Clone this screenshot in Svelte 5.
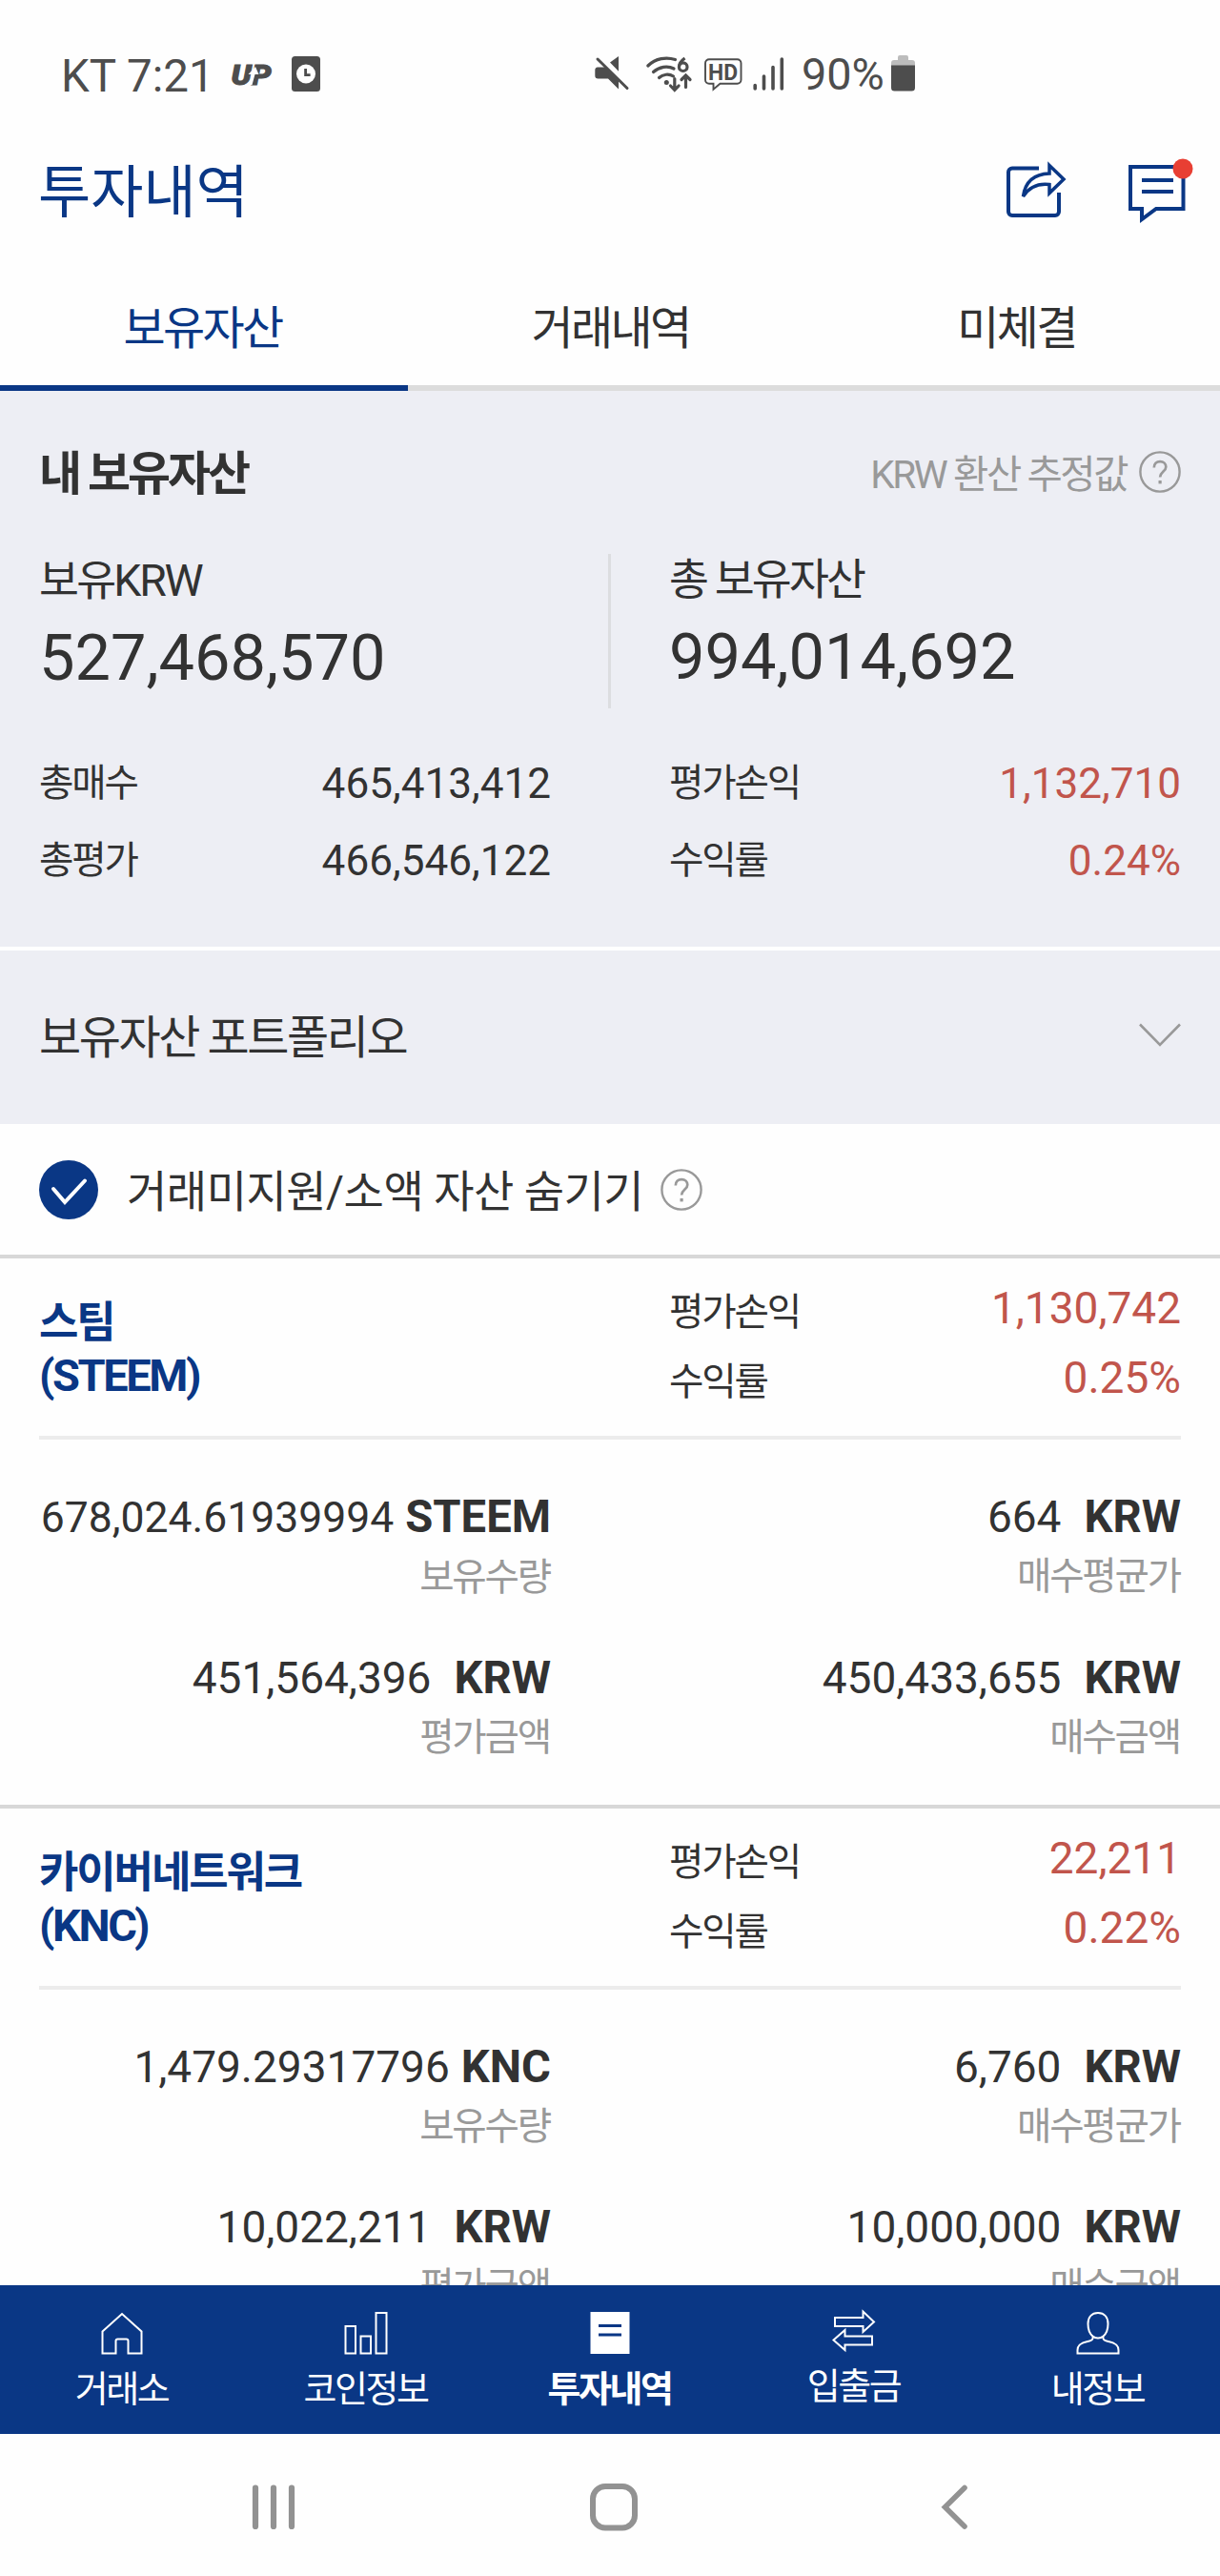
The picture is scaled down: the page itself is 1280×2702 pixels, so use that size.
<script>
    let activeTab = $state("보유자산");
    let hideSmall = $state(true);

    const tabs = ["보유자산", "거래내역", "미체결"];

    const coins = [
        {
            name: "스팀",
            symbol: "STEEM",
            profit: "1,130,742",
            rate: "0.25%",
            amount: "678,024.61939994",
            compact: true,
            avgPrice: "664",
            value: "451,564,396",
            bought: "450,433,655"
        },
        {
            name: "카이버네트워크",
            symbol: "KNC",
            profit: "22,211",
            rate: "0.22%",
            amount: "1,479.29317796",
            compact: false,
            avgPrice: "6,760",
            value: "10,022,211",
            bought: "10,000,000"
        }
    ];

    const menu = [
        { id: "home", label: "거래소" },
        { id: "chart", label: "코인정보" },
        { id: "list", label: "투자내역" },
        { id: "transfer", label: "입출금" },
        { id: "user", label: "내정보" }
    ];
    const activeMenu = "list";
</script>

{#snippet help()}
    <svg class="help" viewBox="0 0 44 44">
        <circle cx="22" cy="22" r="20.6" fill="none" stroke="#999" stroke-width="2.4" />
        <path d="M15.8 17.5c0-4 2.6-6.4 6.3-6.4s6.2 2.3 6.2 5.6c0 5-6.2 5.4-6.2 10.8" fill="none" stroke="#999" stroke-width="2.7" />
        <rect x="20.5" y="31" width="3.2" height="3.4" fill="#999" />
    </svg>
{/snippet}

<div class="screen">
    <div class="status">
        <span class="clock">KT 7:21</span>
        <svg class="up" width="46" height="24" viewBox="0 0 46 24">
            <text x="0.5" y="21.5" textLength="42" lengthAdjust="spacingAndGlyphs">UP</text>
            <path d="M19.5 22l3-11h-4l7.5-8 3.5 8h-4l-3 11z" fill="#fefefe" />
        </svg>
        <svg class="watch" width="30" height="38" viewBox="0 0 30 38">
            <rect width="30" height="37" rx="3.5" fill="#4d4d4d" />
            <circle cx="15" cy="18.5" r="10" fill="#fff" />
            <path d="M14.6 13v6.6h5" fill="none" stroke="#4d4d4d" stroke-width="2.8" />
        </svg>

        <svg class="mute" width="36" height="36" viewBox="0 0 36 36">
            <path d="M3 11.5h7.5L25 26v8.5L14 23.5H3.5a3.2 3.2 0 0 1-3.2-3.2v-5.8a3 3 0 0 1 2.7-3z" fill="#4d4d4d" />
            <path d="M16 6.5L25 0v15.8z" fill="#4d4d4d" />
            <path d="M3 3l31 30.5" stroke="#4d4d4d" stroke-width="3" stroke-linecap="round" />
        </svg>
        <svg class="wifi" width="48" height="37" viewBox="0 0 48 37">
            <g fill="none" stroke="#4d4d4d" stroke-width="3.2" stroke-linecap="round">
                <path d="M1.8 10C10 2 21 .5 30.5 3.5" />
                <path d="M7.5 16.5c6-5.6 15-7 21.5-3.5" />
                <path d="M13.5 22.5c4-3.8 10.5-4.4 15-1.5" />
                <path d="M29.8 23.5v11.5M25.5 31l4.3 4.5 4.3-4.5M41.5 32.5v-12M37 24.5l4.5-4.5 4.5 4.5" />
                <path d="M40.5 2c-3.5 2.5-6 6-6 9" stroke-linecap="butt" />
                <circle cx="38.7" cy="11.2" r="4.3" />
            </g>
            <circle cx="21.3" cy="27.5" r="2.5" fill="#4d4d4d" />
        </svg>
        <svg class="hd" width="40" height="34" viewBox="0 0 40 34">
            <path d="M5 1.2h29.5a4 4 0 0 1 4 4v17.6a4 4 0 0 1-4 4H16.5l-7 6v-6H5a4 4 0 0 1-4-4V5.2a4 4 0 0 1 4-4z" fill="none" stroke="#4d4d4d" stroke-width="1.9" />
            <text x="4" y="22.5" textLength="31" lengthAdjust="spacingAndGlyphs">HD</text>
        </svg>
        <svg class="signal" width="34" height="36" viewBox="0 0 34 36">
            <path d="M2.2 29.5V33M11.5 20V33M21 10.5V33M30.3 2V33" stroke="#4d4d4d" stroke-width="3.6" stroke-linecap="round" />
        </svg>
        <span class="percent">90%</span>
        <svg class="battery" width="25" height="38" viewBox="0 0 25 38">
            <path d="M7 4V2a2 2 0 0 1 2-2h7a2 2 0 0 1 2 2v3h4a3 3 0 0 1 3 3v3H0V8a3 3 0 0 1 3-3h4z" fill="#bcbcbc" />
            <path d="M0 10.5h25V34a3.5 3.5 0 0 1-3.5 3.5h-18A3.5 3.5 0 0 1 0 34z" fill="#4d4d4d" />
        </svg>
    </div>

    <div class="header">
        <h1>투자내역</h1>
        <svg class="share" width="64" height="66" viewBox="0 0 64 66" fill="none" stroke="#0a3785" stroke-width="4">
            <path d="M35 11.5H7a4 4 0 0 0-4 4V57a4 4 0 0 0 4 4h45a4 4 0 0 0 4-4V37" />
            <path d="M46 8.5L61 23 46 37.5V28.5C34 27 25 31 18.5 41 20.5 27 29 17.500 46 17z" stroke-width="3.5" />
        </svg>
        <svg class="message" width="70" height="68" viewBox="0 0 70 68">
            <path d="M2 11h55.5v44H29L14 66V55H2z" fill="none" stroke="#0a3785" stroke-width="4" />
            <path d="M14 25h33M14 37h33" stroke="#0a3785" stroke-width="4.2" />
            <circle cx="57" cy="13" r="10.5" fill="#e83f33" />
        </svg>
    </div>

    <div class="tabs">
        {#each tabs as tab}
        <button class="tab" class:active={tab === activeTab} onclick={() => activeTab = tab}>{tab}</button>
        {/each}
    </div>

    <div class="summary">
        <div class="summary-head">
            <h2>내 보유자산</h2>
            <span class="hint">KRW 환산 추정값</span>
            {@render help()}
        </div>

        <div class="totals">
            <div class="total">
                <div class="total-label">보유<span class="krw">KRW</span></div>
                <div class="total-number">527,468,570</div>
            </div>
            <div class="total right">
                <div class="total-label">총 보유자산</div>
                <div class="total-number">994,014,692</div>
            </div>
        </div>

        <div class="rows">
            <div class="row"><span class="label">총매수</span><span class="number">465,413,412</span></div>
            <div class="row"><span class="label">평가손익</span><span class="number red">1,132,710</span></div>
            <div class="row"><span class="label">총평가</span><span class="number">466,546,122</span></div>
            <div class="row"><span class="label">수익률</span><span class="number red">0.24%</span></div>
        </div>
    </div>

    <div class="portfolio">
        <span>보유자산 포트폴리오</span>
        <svg width="44" height="26" viewBox="0 0 44 26">
            <path d="M1 1.5l21 21.5 21-21.5" fill="none" stroke="#999" stroke-width="2.6" />
        </svg>
    </div>

    <div class="hide">
        <button class="check" class:off={!hideSmall} aria-label="숨기기" onclick={() => hideSmall = !hideSmall}>
            <svg width="62" height="62" viewBox="0 0 62 62">
                <path d="M15 30L27 44 48 21.5" fill="none" stroke="#fff" stroke-width="4" stroke-linecap="round" />
            </svg>
        </button>
        <span>거래미지원/소액 자산 숨기기</span>
        {@render help()}
    </div>

    <div class="coins">
        {#each coins as coin}
        <div class="coin">
            <div class="coin-head">
                <div class="coin-name">{coin.name}<div class="symbol">({coin.symbol})</div></div>
                <div class="coin-profit">
                    <div class="row"><span class="label">평가손익</span><span class="number red">{coin.profit}</span></div>
                    <div class="row"><span class="label">수익률</span><span class="number red">{coin.rate}</span></div>
                </div>
            </div>
            <div class="values">
                <div class="value">
                    <div class="amount coin-amount"><span class:compact={coin.compact}>{coin.amount}</span><b>{coin.symbol}</b></div>
                    <div class="caption">보유수량</div>
                </div>
                <div class="value">
                    <div class="amount"><span>{coin.avgPrice}</span><b>KRW</b></div>
                    <div class="caption">매수평균가</div>
                </div>
                <div class="value">
                    <div class="amount"><span>{coin.value}</span><b>KRW</b></div>
                    <div class="caption">평가금액</div>
                </div>
                <div class="value">
                    <div class="amount"><span>{coin.bought}</span><b>KRW</b></div>
                    <div class="caption">매수금액</div>
                </div>
            </div>
        </div>
        {/each}
    </div>

    <div class="menu">
        {#each menu as item}
        <div class="menu-item {item.id}" class:selected={item.id === activeMenu}>
            <svg width="46" height="48" viewBox="0 0 46 48" fill="none" stroke="#fff" stroke-width="2">
                {#if item.id === "home"}
                <path d="M2.5 22.5L23 4l20.5 18.5V45.5H29.5V32.5a2 2 0 0 0-2-2h-9a2 2 0 0 0-2 2V45.5H2.5z" />
                {:else if item.id === "chart"}
                <path d="M1.5 17h10.5v28.5H1.5zM17.5 27.5H28v18H17.5zM33.5 3H44.5v42.5H33.5z" />
                {:else if item.id === "list"}
                <path d="M2.5 2H43.5V46H2.5z" fill="#fff" stroke="none" />
                <path d="M11 16.5H35M11 26H35" stroke="#0a3785" stroke-width="3" />
                {:else if item.id === "transfer"}
                <path d="M3 8h29.5V1.5L44 12.5 32.5 23V17H3zM42 27.5H13.5V21L1.5 31.5 13.5 42V36.5H42z" />
                {:else}
                <path d="M17.5 27.5C14.5 25 12.5 20.5 12.5 14.5 12.5 7.5 16.5 3 23 3s10.500 4.500 10.500 11.500c0 6-2 10.500-5 13-3 2.700-8 2.700-11 0z" />
                <path d="M17.5 27.5c1 4-1.500 4.500-5.500 5.500-6.500 1.500-10.500 3.500-10.500 9v3.500h43V42c0-5.500-4-7.500-10.500-9-4-1-6.500-1.500-5.500-5.500" />
                {/if}
            </svg>
            <span>{item.label}</span>
        </div>
        {/each}
    </div>

    <div class="system">
        <svg width="46" height="50" viewBox="0 0 46 50">
            <path d="M4 4.5V45M23 4.5V45M42 4.5V45" stroke="#929292" stroke-width="6.2" stroke-linecap="round" />
        </svg>
        <svg width="52" height="52" viewBox="0 0 52 52">
            <rect x="4" y="4" width="44" height="43.5" rx="13" fill="none" stroke="#929292" stroke-width="6" />
        </svg>
        <svg width="30" height="50" viewBox="0 0 30 50">
            <path d="M26 4.5L5.5 24.7 26 45" fill="none" stroke="#929292" stroke-width="5.6" stroke-linecap="round" />
        </svg>
    </div>
</div>

<style>
:global(body) {
    margin: 0;
    background: #fefefe;
}

.screen {
    width: 1280px;
    height: 2702px;
    display: flex;
    flex-direction: column;
    overflow: hidden;
    background: #fefefe;
    color: #323232;
    font-family: Roboto, "Noto Sans CJK KR", sans-serif;
    white-space: nowrap;
}

svg {
    display: block;
    flex-shrink: 0;
    overflow: visible;
}

h1, h2 {
    margin: 0;
}

button {
    padding: 0;
    border: none;
    background: none;
    color: inherit;
    font-family: inherit;
}

/* STATUS */
.status {
    height: 160px;
    flex-shrink: 0;
    display: flex;
    align-items: center;
    color: #4d4d4d;
    font-size: 47.5px;
    line-height: 160px;
}

.clock {
    width: 178px;
    padding-left: 64px;
}

.up {
    margin-right: 18px;
    margin-bottom: 3px;
}

.up text {
    font-size: 29px;
    font-weight: 900;
    font-style: italic;
    fill: #4d4d4d;
    stroke: #4d4d4d;
    stroke-width: 1;
}

.watch {
    margin-right: 288px;
    margin-bottom: 5px;
}

.mute {
    margin-right: 18px;
    margin-bottom: 6px;
}

.wifi {
    margin-right: 13px;
    margin-bottom: 6px;
}

.hd {
    margin-right: 11px;
    margin-bottom: 5px;
}

.hd text {
    font-size: 24px;
    font-weight: 700;
    fill: #4d4d4d;
}

.signal {
    margin-right: 17px;
    margin-bottom: 5px;
}

.percent {
    width: 94px;
    padding-bottom: 5px;
    font-size: 46.8px;
}

.battery {
    margin-bottom: 6px;
}

/* HEADER */
.header {
    height: 86px;
    padding: 0 37px 38px 40px;
    flex-shrink: 0;
    display: flex;
    align-items: center;
    color: #0a3785;
}

h1 {
    flex: 1;
    font-size: 60px;
    font-weight: 400;
    line-height: 90px;
}

.share {
    margin-right: 65px;
    margin-bottom: 10px;
}

.message {
    margin-right: -11px;
    margin-bottom: 10px;
}

/* TABS */
.tabs {
    height: 126px;
    flex-shrink: 0;
    display: flex;
}

.tab {
    flex: 1;
    padding: 2px 1px 0 0;
    border-bottom: 6px solid #dcdcdc;
    font-size: 48px;
    line-height: 118px;
    letter-spacing: -2.7px;
    cursor: pointer;
}

.tab.active {
    padding-right: 3px;
    border-color: #0a3785;
    color: #0a3785;
}

/* SUMMARY */
.summary {
    height: 539px;
    padding: 44px 41px 0;
    flex-shrink: 0;
    background: #edeef4;
    border-bottom: 4px solid #fff;
}

.summary-head {
    height: 88px;
    display: flex;
    align-items: center;
    line-height: 88px;
}

h2 {
    flex: 1;
    font-size: 49px;
    font-weight: 700;
    letter-spacing: -3.1px;
}

.hint {
    color: #999;
    font-size: 40.5px;
    letter-spacing: -2.4px;
}

.help {
    width: 44px;
    height: 44px;
    margin-left: 13px;
    margin-bottom: 6px;
}

.totals {
    height: 160px;
    margin-top: 39px;
    display: grid;
    grid-template-columns: 597px 1fr;
}

.total.right {
    padding-left: 61px;
    border-left: 3px solid #dcdde0;
}

.total-label {
    font-size: 45.6px;
    line-height: 56px;
    letter-spacing: -2.8px;
}

.krw {
    font-size: 46.4px;
    letter-spacing: -2.2px;
}

.total-number {
    font-size: 66.7px;
    line-height: 105px;
}

.rows {
    margin-top: 40px;
    display: grid;
    grid-template-columns: 537px 537px;
    column-gap: 124px;
    font-size: 44.1px;
}

.row {
    display: flex;
    justify-content: space-between;
    line-height: 82px;
    height: 81px;
}

.label {
    font-size: 39.6px;
    letter-spacing: -2.2px;
}

.red {
    color: #c1554c;
}

/* PORTFOLIO */
.portfolio {
    height: 182px;
    padding: 0 41px;
    flex-shrink: 0;
    display: flex;
    align-items: center;
    justify-content: space-between;
    background: #edeef4;
    font-size: 48px;
    line-height: 184px;
    letter-spacing: -2.4px;
}

.portfolio span {
    padding-top: 2px;
}

.portfolio svg {
    margin-bottom: 4px;
}

/* HIDE */
.hide {
    height: 137px;
    padding: 0 41px;
    flex-shrink: 0;
    display: flex;
    align-items: center;
    font-size: 46px;
    line-height: 140px;
    letter-spacing: -0.5px;
}

.hide span {
    padding-top: 4px;
}

.hide .help {
    margin-left: 18px;
    margin-bottom: 0;
}

.check {
    width: 62px;
    height: 62px;
    margin-right: 30px;
    border-radius: 50%;
    background: #0a3785;
    cursor: pointer;
}

.check.off {
    background: #ccc;
}

/* COINS */
.coins {
    height: 1081px;
    flex-shrink: 0;
    overflow: hidden;
}

.coin {
    height: 573px;
    padding: 0 41px;
    border-top: 4px solid #d8d8d8;
}

.coin-head {
    height: 186px;
    display: flex;
    justify-content: space-between;
    border-bottom: 4px solid #ececec;
}

.coin-name {
    padding-top: 40px;
    color: #0a3785;
    font-size: 45px;
    font-weight: 700;
    line-height: 56px;
    letter-spacing: -2.1px;
}

.symbol {
    font-size: 47px;
    line-height: 53px;
    letter-spacing: -2.4px;
}

.coin-profit {
    width: 537px;
    padding-top: 16px;
    font-size: 46px;
}

.coin-profit .row {
    height: 73px;
    line-height: 73px;
}

.coin-profit .label {
    margin: 4px 0 -4px;
}

.values {
    padding-top: 49px;
    display: grid;
    grid-template-columns: 537px 537px;
    column-gap: 124px;
    row-gap: 44px;
    text-align: right;
}

.amount {
    font-size: 46px;
    line-height: 64px;
}

.amount b {
    margin-left: 24px;
    font-size: 47.2px;
    font-weight: 700;
}

.coin-amount b {
    margin-left: 12px;
}

.compact {
    font-size: 44.5px;
}

.caption {
    padding: 2px 1px 0 0;
    color: #999;
    font-size: 39.6px;
    line-height: 58px;
    letter-spacing: -2.2px;
}

/* MENU */
.menu {
    height: 156px;
    flex-shrink: 0;
    display: flex;
    background: #0a3785;
    color: #fff;
}

.menu-item {
    flex: 1;
    padding-top: 26px;
    display: flex;
    flex-direction: column;
    align-items: center;
    font-size: 38px;
    line-height: 52px;
    letter-spacing: -2.4px;
}

.menu-item span {
    margin-top: 9px;
    padding-right: 1px;
}

.menu-item.transfer span {
    margin-top: 6px;
}

.selected {
    font-weight: 700;
}

/* SYSTEM */
.system {
    width: 1072px;
    height: 145px;
    padding: 4px 0 0 108px;
    display: grid;
    grid-template-columns: repeat(3, 1fr);
    align-items: center;
    justify-items: center;
}
</style>
